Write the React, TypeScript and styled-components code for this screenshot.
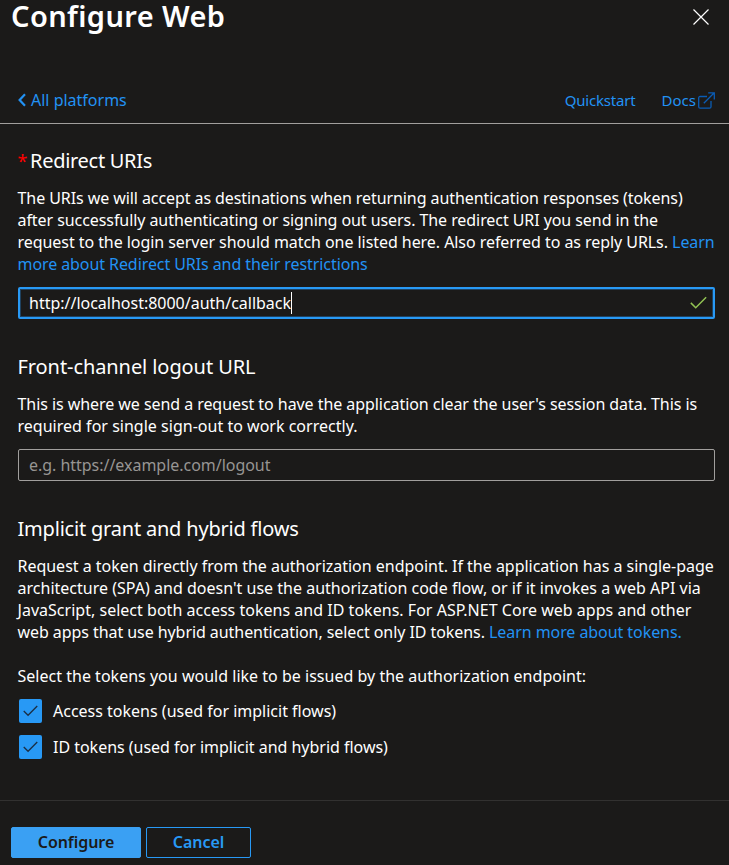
import React from 'react';
import styled, { createGlobalStyle } from 'styled-components';

const GlobalStyle = createGlobalStyle`
  * { box-sizing: border-box; }
  body { margin: 0; background: #1b1a19; }
`;

const Panel = styled.main`
  display: flex;
  flex-direction: column;
  width: 729px;
  height: 865px;
  background: #1b1a19;
  color: #fff;
  font-family: "Noto Sans", "Open Sans", sans-serif;
  font-size: 16px;
  line-height: 22px;
`;

const Header = styled.header`
  display: flex;
  flex: none;
  justify-content: space-between;
  height: 89px;
  padding: 0 20px 0 11px;
`;

const Title = styled.h1`
  margin: 0;
  font-size: 29px;
  font-weight: 600;
  line-height: 32px;
  letter-spacing: 0.4px;
`;

const CloseButton = styled.button`
  display: flex;
  align-self: flex-start;
  margin-top: 9px;
  padding: 0;
  border: 0;
  background: none;
  color: #fff;
`;

const Toolbar = styled.nav`
  display: flex;
  flex: none;
  align-items: flex-start;
  height: 35px;
  padding: 0 14px 0 17px;
  border-bottom: 1px solid #a19f9d;
`;

const Link = styled.a`
  color: #2292f4;
  text-decoration: none;
`;

const BackLink = styled(Link)`
  display: flex;
  align-items: center;
  gap: 4px;
  margin-right: auto;
`;

const ToolbarLink = styled(Link)`
  display: flex;
  align-items: center;
  height: 22px;
  margin-left: 26px;
  font-size: 15px;
  line-height: 20px;
  letter-spacing: -0.18px;
`;

const DocsLink = styled(ToolbarLink)`
  gap: 2px;
  letter-spacing: 0;
`;

const Content = styled.form`
  display: flex;
  flex-direction: column;
  flex: 1;
  min-height: 0;
  padding: 23px 14px 0 18px;
`;

const Section = styled.section`
  display: flex;
  flex: none;
  flex-direction: column;
  margin-bottom: 34px;
`;

const Heading = styled.h2<{ $tracking: number }>`
  margin: 0 0 12px -0.5px;
  font-size: 20px;
  font-weight: 400;
  line-height: 28px;
  letter-spacing: ${(p) => p.$tracking}px;
`;

const Required = styled.span`
  display: inline-block;
  width: 12.5px;
  color: #f00;
  font-size: 18px;
  line-height: 20px;
  letter-spacing: 0;
`;

const Paragraph = styled.p`
  margin: 0 0 12px -0.5px;
`;

const Instruction = styled(Paragraph)`
  margin-top: 10px;
`;

const Line = styled.span<{ $tracking: number }>`
  display: block;
  white-space: nowrap;
  letter-spacing: ${(p) => p.$tracking}px;
`;

const Field = styled.div<{ $focused?: boolean }>`
  display: flex;
  align-items: center;
  height: 32px;
  padding: 0 ${(p) => (p.$focused ? '6px 0 9px' : '10px')};
  border: ${(p) => (p.$focused ? '2px solid #2899f5' : '1px solid #a19f9d')};
  border-radius: 2px;
  box-shadow: ${(p) => (p.$focused ? 'inset 0 0 0 1px #1f4260' : 'none')};
  color: ${(p) => (p.$focused ? '#fff' : '#979593')};
`;

const Caret = styled.span`
  width: 1px;
  height: 22px;
  margin-right: auto;
  background: #fff;
`;

const Option = styled.label`
  display: flex;
  align-items: center;
  gap: 11px;
  height: 24px;
  margin-bottom: 12px;
  padding-left: 1px;
`;

const CheckBox = styled.span`
  display: grid;
  place-items: center;
  width: 23px;
  height: 24px;
  border-radius: 2px;
  background: #2899f5;
`;

const Footer = styled.footer`
  display: flex;
  flex: none;
  gap: 5px;
  height: 65px;
  padding: 26px 11px 0;
  border-top: 1px solid #323130;
`;

const Button = styled.button<{ $primary?: boolean }>`
  width: ${(p) => (p.$primary ? 130 : 105)}px;
  height: 31px;
  padding: 0 0 1px;
  border: 1px solid ${(p) => (p.$primary ? '#3aa0f3' : '#2899f5')};
  border-radius: 2px;
  background: ${(p) => (p.$primary ? '#3aa0f3' : 'transparent')};
  color: ${(p) => (p.$primary ? '#1b1a19' : '#2899f5')};
  font: 600 16px/22px "Noto Sans", sans-serif;
  letter-spacing: -0.05px;
`;

const Tick = ({ color, size }: { color: string; size: number }) => (
  <svg width={size} height={size} viewBox="0 0 16 16" fill="none" stroke={color} strokeWidth="1.4">
    <path d="M.8 7.4 5.4 12 15.2 2.2" />
  </svg>
);

const TokenOption = ({ label, tracking }: { label: string; tracking: number }) => (
  <Option>
    <CheckBox>
      <Tick color="#1b2f45" size={15} />
    </CheckBox>
    <Line $tracking={tracking}>{label}</Line>
  </Option>
);

export default function App() {
  return (
    <Panel>
      <GlobalStyle />
      <Header>
        <Title>Configure Web</Title>
        <CloseButton type="button" aria-label="Close">
          <svg width="16" height="16" viewBox="0 0 16 16" stroke="currentColor" strokeWidth="1.2">
            <path d="M.5.5 15.5 15.5M15.5.5.5 15.5" />
          </svg>
        </CloseButton>
      </Header>
      <Toolbar>
        <BackLink>
          <svg width="10" height="14" viewBox="0 0 10 14" fill="none" stroke="currentColor" strokeWidth="2.2">
            <path d="M8 1.2 2.6 7 8 12.8" />
          </svg>
          All platforms
        </BackLink>
        <ToolbarLink>Quickstart</ToolbarLink>
        <DocsLink>
          Docs
          <svg width="17" height="17" viewBox="0 0 17 17" fill="none" stroke="#0a5cb5" strokeWidth="1.3">
            <path d="M9 4.5H2.2Q.7 4.5.7 6V14.7Q.7 16.2 2.2 16.2H11.5Q13 16.2 13 14.7V9" />
            <path d="M5.8 11.2 16 1M10.2.8H16.3V7.5" />
          </svg>
        </DocsLink>
      </Toolbar>
      <Content>
        <Section>
          <Heading $tracking={-0.29}>
            <Required>*</Required>Redirect URIs
          </Heading>
          <Paragraph>
            <Line $tracking={-0.078}>The URIs we will accept as destinations when returning authentication responses (tokens)</Line>
            <Line $tracking={-0.07}>after successfully authenticating or signing out users. The redirect URI you send in the</Line>
            <Line $tracking={-0.058}>
              request to the login server should match one listed here. Also referred to as reply URLs. <Link>Learn</Link>
            </Line>
            <Line $tracking={-0.08}>
              <Link>more about Redirect URIs and their restrictions</Link>
            </Line>
          </Paragraph>
          <Field $focused>
            <Line $tracking={-0.01}>http://localhost:8000/auth/callback</Line>
            <Caret />
            <Tick color="#92c353" size={17} />
          </Field>
        </Section>
        <Section>
          <Heading $tracking={-0.08}>Front-channel logout URL</Heading>
          <Paragraph>
            <Line $tracking={-0.06}>
              This is where we send a request to have the application clear the user's session data. This is
            </Line>
            <Line $tracking={0.015}>required for single sign-out to work correctly.</Line>
          </Paragraph>
          <Field>
            <Line $tracking={-0.03}>e.g. https://example.com/logout</Line>
          </Field>
        </Section>
        <Section>
          <Heading $tracking={-0.2}>Implicit grant and hybrid flows</Heading>
          <Paragraph>
            <Line $tracking={-0.02}>
              Request a token directly from the authorization endpoint. If the application has a single-page
            </Line>
            <Line $tracking={0.014}>
              architecture (SPA) and doesn't use the authorization code flow, or if it invokes a web API via
            </Line>
            <Line $tracking={0.02}>JavaScript, select both access tokens and ID tokens. For ASP.NET Core web apps and other</Line>
            <Line $tracking={-0.066}>
              web apps that use hybrid authentication, select only ID tokens. <Link>Learn more about tokens.</Link>
            </Line>
          </Paragraph>
          <Instruction>
            <Line $tracking={0.015}>Select the tokens you would like to be issued by the authorization endpoint:</Line>
          </Instruction>
          <TokenOption label="Access tokens (used for implicit flows)" tracking={0} />
          <TokenOption label="ID tokens (used for implicit and hybrid flows)" tracking={-0.02} />
        </Section>
      </Content>
      <Footer>
        <Button type="button" $primary>Configure</Button>
        <Button type="button">Cancel</Button>
      </Footer>
    </Panel>
  );
}
